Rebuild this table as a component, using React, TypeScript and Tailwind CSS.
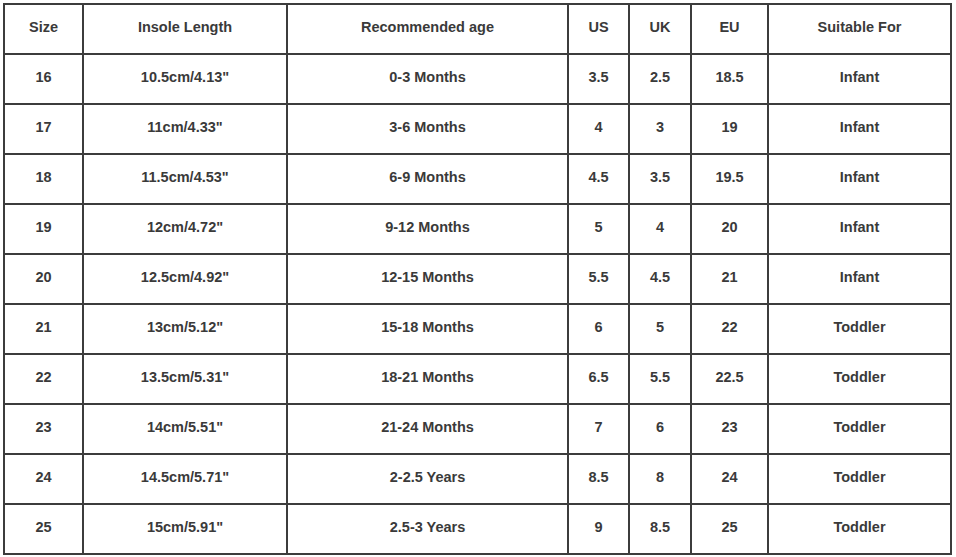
import React from 'react';

const headers = ['Size', 'Insole Length', 'Recommended age', 'US', 'UK', 'EU', 'Suitable For'];

const rows: string[][] = [
  ['16', '10.5cm/4.13"', '0-3 Months', '3.5', '2.5', '18.5', 'Infant'],
  ['17', '11cm/4.33"', '3-6 Months', '4', '3', '19', 'Infant'],
  ['18', '11.5cm/4.53"', '6-9 Months', '4.5', '3.5', '19.5', 'Infant'],
  ['19', '12cm/4.72"', '9-12 Months', '5', '4', '20', 'Infant'],
  ['20', '12.5cm/4.92"', '12-15 Months', '5.5', '4.5', '21', 'Infant'],
  ['21', '13cm/5.12"', '15-18 Months', '6', '5', '22', 'Toddler'],
  ['22', '13.5cm/5.31"', '18-21 Months', '6.5', '5.5', '22.5', 'Toddler'],
  ['23', '14cm/5.51"', '21-24 Months', '7', '6', '23', 'Toddler'],
  ['24', '14.5cm/5.71"', '2-2.5 Years', '8.5', '8', '24', 'Toddler'],
  ['25', '15cm/5.91"', '2.5-3 Years', '9', '8.5', '25', 'Toddler'],
];

export default function App() {
  return (
    <div className="w-[956px] h-[557px] bg-white pt-[3px] pl-[3px]">
      {/* Size chart */}
      <table
        className="table-fixed border-collapse border-2 border-[#3c3c3c] text-[14.5px] font-bold text-[#3a3a3a] w-[949px]"
        style={{ fontFamily: '"Liberation Sans", Arial, sans-serif' }}
      >
        <colgroup>
          <col className="w-[79px]" />
          <col className="w-[204px]" />
          <col className="w-[281px]" />
          <col className="w-[61px]" />
          <col className="w-[62px]" />
          <col className="w-[77px]" />
          <col />
        </colgroup>
        <thead>
          <tr className="h-[50px]">
            {headers.map((h) => (
              <th key={h} className="border-2 border-[#3c3c3c] text-center align-middle font-bold p-0 pb-[2px]">
                {h}
              </th>
            ))}
          </tr>
        </thead>
        <tbody>
          {rows.map((r) => (
            <tr key={r[0]} className="h-[50px]">
              {r.map((c, i) => (
                <td key={i} className="border-2 border-[#3c3c3c] text-center align-middle p-0 pb-[2px]">
                  {c}
                </td>
              ))}
            </tr>
          ))}
        </tbody>
      </table>
    </div>
  );
}
